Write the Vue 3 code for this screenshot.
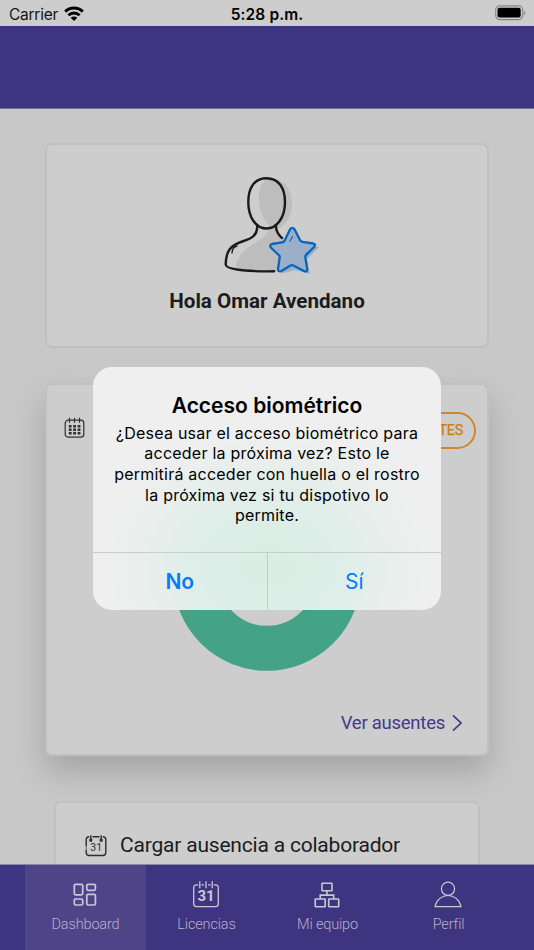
<template>
  <div class="screen">
    <header class="status">
      <div class="carrier">
        <span class="carrier-name">Carrier</span>
        <svg class="wifi" viewBox="0 0 20 15">
          <path d="M1.2 5.6C6 .8 14 .8 18.800 5.600" />
          <path d="M4.4 9.200c3.200-3 8-3 11.200 0" />
          <path class="wifi-dot" d="M10 15 6.700 11.800c1.800-1.700 4.800-1.700 6.600 0z" />
        </svg>
      </div>
      <span class="time">5:28 p.m.</span>
      <div class="battery-wrap">
        <svg class="battery" viewBox="0 0 31 16">
          <rect x=".7" y=".9" width="27" height="13.7" rx="4" fill="none" stroke="#858585" stroke-width="1.2" />
          <rect x="2.5" y="2.8" width="23.2" height="9.8" rx="2" />
          <path d="M29.2 5.4c1.6.8 1.6 4 0 4.8z" fill="#858585" />
        </svg>
      </div>
    </header>
    <div class="banner"></div>

    <main class="content">
      <section class="card profile">
        <svg class="avatar" viewBox="0 0 100 100">
          <path
            class="shade"
            d="M42 3.5c16-4 26 8 26 24 0 14-7 23-15 25l4 8 14 12-5 24-54.500-2c0-17 14-24 25-31 7-5 9-9 8-15-12-13-13-37-2.500-45z"
          />
          <g class="outline">
            <path d="M42.500 2.200c12 0 18.500 9.500 18.500 24 0 15-8 26.300-18.500 26.300S24.300 41.200 24.300 26.200c0-14.500 6.200-24 18.200-24z" />
            <path d="M33.300 50c0 10-6 12.600-15 15.500C6 69.500 2 75 1.700 88.500c.3 4 12 7.200 48.300 6.800" />
            <path d="M52 50c0 6 2.500 9 6 12" />
            <path d="M8 77c.3-4 2-6.500 5-7" stroke-width="1.3" />
          </g>
          <path class="star-shade" d="m71 56 7 13 17 2-12 12 3 15-15-4-13 3 1-16-12-9 17-4z" />
          <path
            class="star"
            d="M66.100 53.300q2.200-3 4.400 0l5.500 10.800q.8 1.600 2.500 1.800l10.800 1.600q2.800.8 1 3.200l-8.200 8.200q-1 1-.8 2.500l1.900 11.800q0 3-2.800 2l-11-5.700q-1.500-.8-3 0l-9 5.600q-3.400 1-3.400-2.100l1.700-11.500q.2-1.500-1-2.500l-7.900-7.500q-1.500-2.800 1.200-3.500l10.200-1.600q1.700-.3 2.500-1.800z"
          />
          <path class="star-light" d="m66 65 2.500-4.500" />
        </svg>
        <h1 class="greeting">Hola Omar Avendano</h1>
      </section>

      <section class="card absences">
        <div class="absences-head">
          <svg class="calendar" viewBox="0 0 22 22">
            <rect x="1.2" y="3.2" width="18.6" height="17" rx="3" />
            <path d="M5.500.7v5M10.500.7v5M15.500.7v5" />
            <path class="days" d="M4.800 9.300h12M4.800 12.800h12M4.800 16.300h12" />
          </svg>
          <span class="pill">TES</span>
        </div>
        <svg class="donut" viewBox="0 0 188 188">
          <circle cx="94" cy="94" r="71.3" />
        </svg>
        <a class="more">
          Ver ausentes
          <svg class="chevron" viewBox="0 0 10 18"><path d="m1 1.300 8 7.700-8 7.700" /></svg>
        </a>
      </section>

      <section class="card action">
        <svg class="calendar31" viewBox="0 0 22 22">
          <path d="M4.200 1.700C2 1.700 1.200 2.500 1.200 4.700v6.800m0 1v1m0 1v3c0 2.200.8 3 3 3h13.600c2.200 0 3-.8 3-3V4.700c0-2.200-.8-3-3-3M7.500 1.700h7" />
          <path d="M5.800.3v5M16.200.3v5" />
          <circle cx="5.8" cy="5.200" r="1" />
          <circle cx="16.2" cy="5.200" r="1" />
          <text x="11.2" y="16.2">31</text>
        </svg>
        <span>Cargar ausencia a colaborador</span>
      </section>
    </main>

    <nav class="tabs">
      <a v-for="tab in tabs" :key="tab.id" class="tab" :class="{ active: tab.id === current }" @click="current = tab.id">
        <svg class="tab-icon" viewBox="0 0 28 28">
          <g v-if="tab.id === 'dashboard'" stroke-width="1.7">
            <rect x="3.3" y="3.3" width="8.4" height="10.5" rx="1.3" />
            <rect x="15.8" y="3.3" width="8.6" height="6" rx="1.3" />
            <rect x="3.3" y="18" width="8.4" height="6" rx="1.3" />
            <rect x="15.8" y="13.3" width="8.6" height="10.7" rx="1.3" />
          </g>
          <g v-else-if="tab.id === 'licencias'" stroke-width="1.3">
            <path d="M6.200 3.800H4.500C2.500 3.800 1.700 5 1.700 7v15.500c0 2 .8 3.200 2.800 3.200h19c2 0 2.800-1.200 2.800-3.200V7c0-2-.8-3.200-2.800-3.200h-1.700M9.400 3.800H12M16 3.800h2.600" />
            <path d="M7.800.3v7M14 .3v7M20.200.3v7" />
            <text x="14" y="20.3">31</text>
          </g>
          <g v-else-if="tab.id === 'equipo'" stroke-width="1.6">
            <rect x="9" y="2.2" width="10" height="7.6" rx=".5" />
            <rect x="2.2" y="18" width="10" height="7.7" rx=".5" />
            <rect x="15.7" y="18" width="10" height="7.7" rx=".5" />
            <path d="M14 9.800v4.300M7.200 18v-3.900h13.500V18" />
          </g>
          <g v-else stroke-width="1.2">
            <circle cx="14" cy="7.8" r="6.6" />
            <path d="M1 25.700C2.500 18.500 8 14.500 14 14.500s11.500 4 13 11.200z" />
          </g>
        </svg>
        <span class="tab-label">{{ tab.label }}</span>
      </a>
    </nav>

    <div v-if="showDialog" class="overlay">
      <div class="dialog" role="alertdialog">
        <div class="dialog-body">
          <h2 class="dialog-title">Acceso biométrico</h2>
          <p class="dialog-text">
            ¿Desea usar el acceso biométrico para<br />
            acceder la próxima vez? Esto le<br />
            permitirá acceder con huella o el rostro<br />
            la próxima vez si tu dispotivo lo<br />
            permite.
          </p>
        </div>
        <div class="dialog-actions">
          <button class="dialog-btn strong" @click="showDialog = false">No</button>
          <button class="dialog-btn" @click="showDialog = false">Sí</button>
        </div>
      </div>
    </div>
  </div>
</template>

<script setup>
  import { ref } from "vue";

  const showDialog = ref(true);
  const current = ref("dashboard");
  const tabs = [
    { id: "dashboard", label: "Dashboard" },
    { id: "licencias", label: "Licencias" },
    { id: "equipo", label: "Mi equipo" },
    { id: "perfil", label: "Perfil" },
  ];
</script>

<style>
  body {
    margin: 0;
    overflow: hidden;
  }
</style>

<style scoped>
  * {
    box-sizing: border-box;
  }

  .screen {
    position: relative;
    display: flex;
    flex-direction: column;
    width: 534px;
    height: 950px;
    overflow: hidden;
    background: #c8c8c8;
    font-family: Roboto, sans-serif;
    color: #1c1c1e;
  }

  svg {
    display: block;
    flex: none;
  }

  .status {
    display: grid;
    grid-template-columns: 1fr auto 1fr;
    align-items: center;
    height: 26px;
    padding: 3px 7px 0 9px;
    background: #cdcdcd;
    font-family: Inter, sans-serif;
    font-size: 15.5px;
    line-height: 22px;
    color: #000;
  }

  .carrier {
    display: flex;
    align-items: center;
    gap: 6px;
  }

  .carrier-name {
    color: #151515;
    letter-spacing: -0.25px;
  }

  .wifi {
    width: 20px;
    height: 15px;
    margin-top: -3px;
    fill: none;
    stroke: #000;
    stroke-width: 2.9;
  }

  .wifi-dot {
    fill: #000;
    stroke: none;
  }

  .time {
    margin-right: 2px;
    font-weight: 600;
    letter-spacing: 0.1px;
  }

  .battery-wrap {
    display: flex;
    justify-content: flex-end;
    margin-top: -3px;
  }

  .battery {
    width: 31px;
    height: 16px;
    margin-right: 1px;
  }

  .banner {
    flex: none;
    height: 83px;
    background: #3f347f;
    border-bottom: 1px solid #766ca0;
  }

  .content {
    display: flex;
    flex: 1;
    flex-direction: column;
    align-items: center;
    min-height: 0;
    padding-top: 34px;
    overflow: hidden;
  }

  .card {
    flex: none;
    background: #cdcdcd;
    border: 2px solid #bcc1c6;
    border-radius: 7px;
  }

  .profile {
    display: flex;
    flex-direction: column;
    align-items: center;
    width: 444px;
    height: 205px;
    padding-top: 31px;
  }

  .avatar {
    width: 100px;
    height: 100px;
    margin-left: 14px;
    overflow: visible;
  }

  .shade {
    fill: #bdbdbd;
  }

  .outline {
    fill: none;
    stroke: #1a1a1a;
    stroke-width: 2.4;
    stroke-linecap: round;
  }

  .star-shade {
    fill: #96afca;
  }

  .star {
    fill: #9bb0c8;
    stroke: #0865bd;
    stroke-width: 2.3;
    stroke-linejoin: round;
  }

  .star-light {
    stroke: #0865bd;
    stroke-width: 1.2;
    stroke-linecap: round;
  }

  .greeting {
    margin: 12px 0 0;
    font-size: 20.6px;
    font-weight: 700;
    line-height: 26px;
  }

  .absences {
    display: flex;
    flex-direction: column;
    width: 444px;
    height: 373px;
    margin-top: 35px;
    padding: 27px 11px 18px 17px;
    box-shadow: 0 16px 32px rgba(0, 0, 0, 0.18);
  }

  .absences-head {
    display: flex;
    justify-content: space-between;
    align-items: flex-start;
  }

  .calendar {
    width: 22px;
    height: 22px;
    margin-top: 5px;
    fill: none;
    stroke: #303030;
    stroke-width: 1.2;
  }

  .days {
    stroke-width: 2.5;
    stroke-dasharray: 2.8 1.6;
  }

  .pill {
    width: 98px;
    height: 37px;
    padding: 0 11px;
    border: 2px solid #d2852e;
    border-radius: 19px;
    font-size: 14.5px;
    line-height: 34px;
    text-align: right;
    letter-spacing: -0.3px;
    -webkit-text-stroke: 0.25px #d57b12;
    color: #d57b12;
  }

  .donut {
    align-self: center;
    width: 188px;
    height: 188px;
    margin: 33.7px 0 0 -6px;
    fill: none;
    stroke: #44a386;
    stroke-width: 45;
  }

  .more {
    display: flex;
    align-items: center;
    align-self: flex-end;
    gap: 7px;
    margin-top: auto;
    margin-right: 14px;
    font-size: 18.5px;
    line-height: 26px;
    letter-spacing: -0.25px;
    color: #44398a;
  }

  .chevron {
    width: 10px;
    height: 18px;
    fill: none;
    stroke: #44398a;
    stroke-width: 1.7;
  }

  .action {
    position: relative;
    display: flex;
    align-items: center;
    gap: 13px;
    width: 426px;
    height: 88px;
    margin-top: 45px;
    padding: 0 29px;
    font-size: 21px;
    letter-spacing: -0.2px;
  }

  .calendar31 {
    width: 22px;
    height: 22px;
    margin-top: 2px;
    fill: none;
    stroke: #2d2d2d;
    stroke-width: 1.4;
  }

  .calendar31 text {
    fill: #2d2d2d;
    stroke: none;
    font-size: 10.5px;
    letter-spacing: 0;
    text-anchor: middle;
  }

  .tabs {
    position: relative;
    display: flex;
    flex: none;
    height: 86px;
    padding: 0 25px;
    background: #3f347f;
    border-top: 1px solid #8c86a6;
  }

  .tab {
    display: flex;
    flex: 1;
    flex-direction: column;
    align-items: center;
    padding-top: 16px;
    color: #b5b1c9;
  }

  .tab.active {
    background: #4f4488;
  }

  .tab-icon {
    width: 28px;
    height: 28px;
    margin-left: -1px;
    fill: none;
    stroke: #cac8d5;
  }

  .tab-icon text {
    fill: #cac8d5;
    stroke: none;
    font-size: 15px;
    font-weight: 700;
    text-anchor: middle;
  }

  .tab-label {
    margin-top: 6px;
    font-size: 14.5px;
    font-weight: 300;
    line-height: 20px;
    letter-spacing: -0.15px;
  }

  .overlay {
    position: absolute;
    inset: 0;
    display: flex;
    justify-content: center;
    align-items: flex-start;
    padding-top: 366.5px;
  }

  .dialog {
    display: flex;
    flex-direction: column;
    width: 348px;
    height: 243px;
    overflow: hidden;
    border-radius: 19px;
    background:
      radial-gradient(ellipse 165px 135px at 50% 82%, #dbeee6 0%, #dceee7 35%, rgba(220, 238, 231, 0) 100%),
      #efefef;
    font-family: Inter, sans-serif;
    text-align: center;
    color: #000;
  }

  .dialog-body {
    flex: 1;
    padding-top: 25px;
  }

  .dialog-title {
    margin: 0;
    font-size: 21px;
    font-weight: 600;
    line-height: 28px;
    letter-spacing: 0;
  }

  .dialog-text {
    margin: 3px 0 0;
    font-size: 16px;
    line-height: 20.7px;
    letter-spacing: 0.23px;
    white-space: nowrap;
  }

  .dialog-actions {
    display: flex;
    height: 57.5px;
    border-top: 1px solid #c6cecb;
  }

  .dialog-btn {
    flex: 1;
    padding: 0;
    border: none;
    background: none;
    font-family: inherit;
    font-size: 21px;
    color: #067bfb;
    cursor: pointer;
  }

  .dialog-btn.strong {
    border-right: 1px solid #bfd0c9;
    font-weight: 600;
  }
</style>
